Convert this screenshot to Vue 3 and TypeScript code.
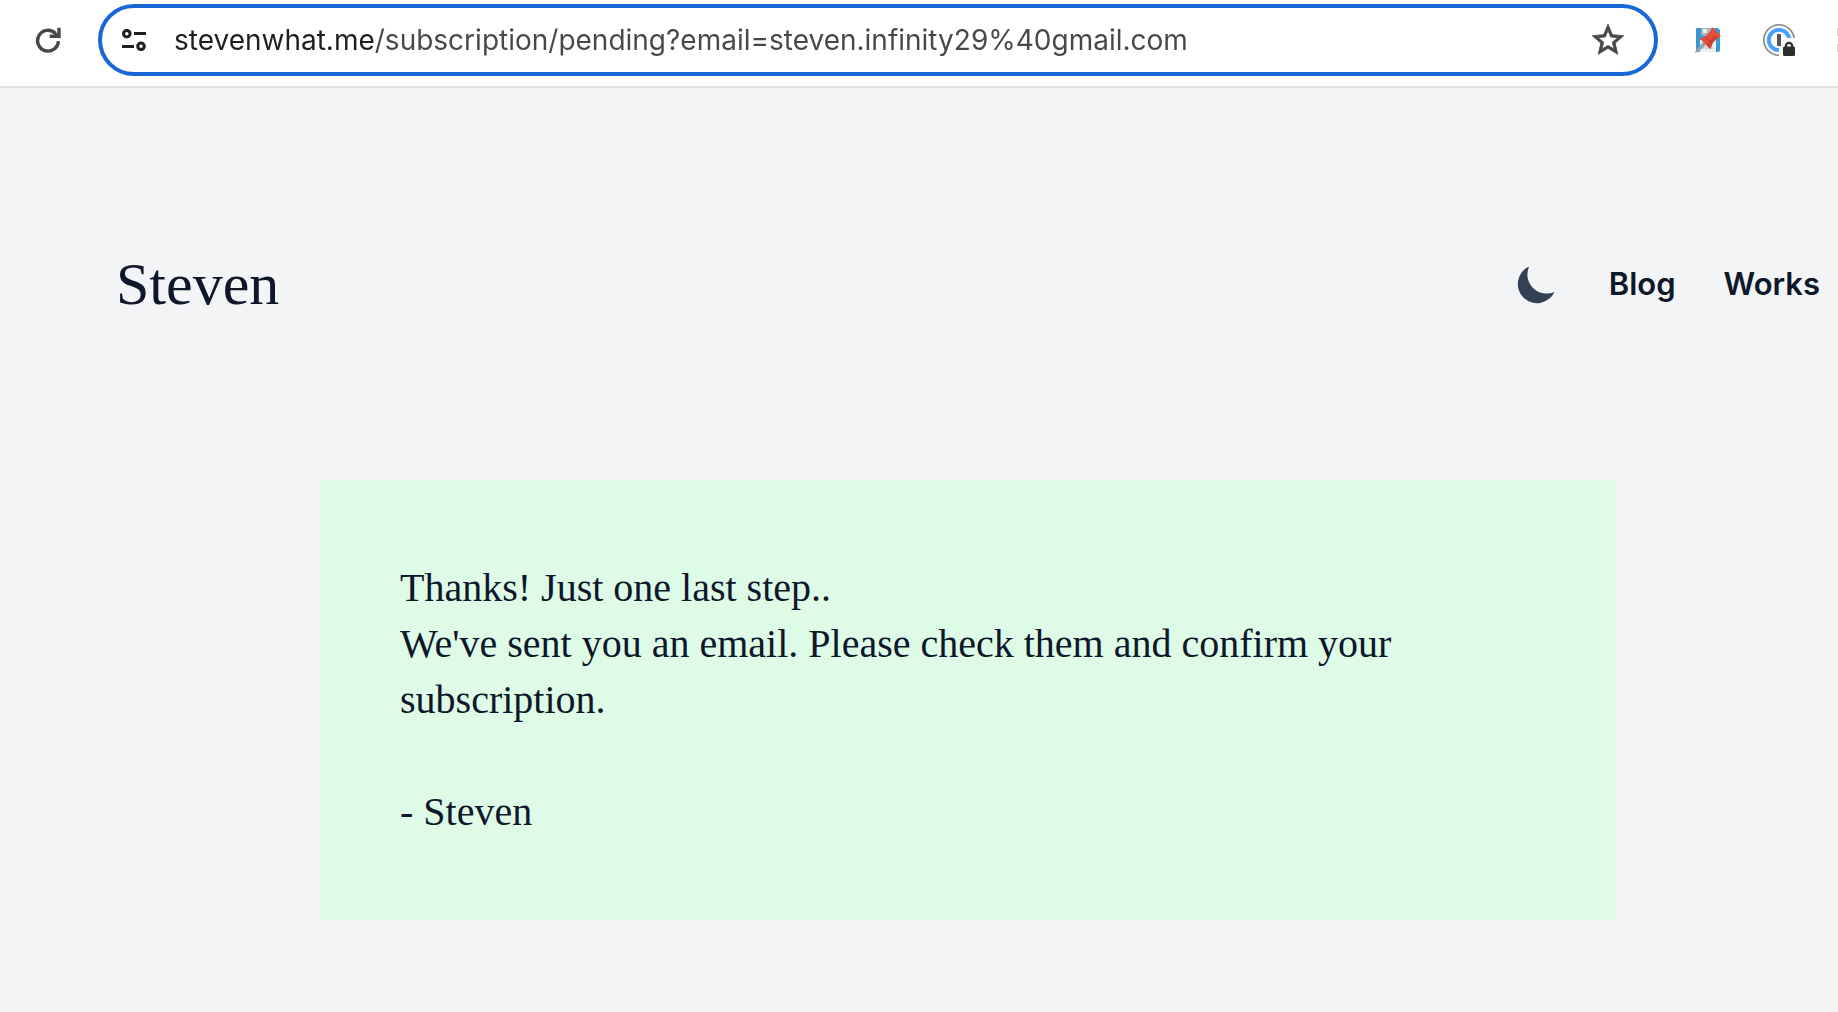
<script setup lang="ts">
import { ref } from 'vue'

const url = ref('stevenwhat.me/subscription/pending?email=steven.infinity29%40gmail.com')
const links: string[] = ['Blog', 'Works']
</script>

<template>
  <div class="window">
    <div class="toolbar">
      <button class="icon-button" type="button" aria-label="Reload">
        <svg width="26" height="26" viewBox="0 0 26 26" fill="none" stroke="#474747" stroke-width="3.4">
          <path d="M23.4 14.2A10.4 10.4 0 1 1 20.4 6.4" />
          <path d="M24 0.8V9.2H14.8" />
          <path d="M18.4 4.8L23.4 9.6" stroke-width="2.8" />
        </svg>
      </button>

      <div class="omnibox">
        <button class="icon-button" type="button" aria-label="View site information">
          <svg width="24" height="22" viewBox="0 0 24 22" fill="none" stroke="#1f1f1f" stroke-width="3">
            <circle cx="4.8" cy="4.7" r="3.3" />
            <path d="M12 4.5H24M0 17.5H12" />
            <circle cx="19" cy="17.3" r="3.3" />
          </svg>
        </button>
        <input v-model="url" class="url" type="text" aria-label="Address bar" spellcheck="false" />
        <button class="icon-button" type="button" aria-label="Bookmark this page">
          <svg width="38" height="38" viewBox="0 0 24 24" fill="#474747" stroke="#474747" stroke-width="0.5">
            <path fill-rule="evenodd" d="M22 9.24l-7.19-.62L12 2 9.19 8.63 2 9.24l5.46 4.73L5.82 21 12 17.27 18.18 21l-1.63-7.03L22 9.24zM12 15.4l-3.76 2.27 1-4.28-3.32-2.88 4.38-.38L12 6.1l1.71 4.04 4.38.38-3.32 2.88 1 4.28L12 15.4z" />
          </svg>
        </button>
      </div>

      <div class="extensions">
        <button class="icon-button" type="button" aria-label="Save pin">
          <svg width="26" height="26" viewBox="0 0 26 26">
            <path d="M2 1H23L25 3V23a2 2 0 0 1-2 2H3a2 2 0 0 1-2-2V2a1 1 0 0 1 1-1z" fill="#3b97d3" />
            <path d="M6 1H19V7a2 2 0 0 1-2 2H8a2 2 0 0 1-2-2z" fill="#a9b5bd" />
            <path d="M8 2H12V6H8z" fill="#ecf0f1" />
            <path d="M5 13H21V25H5z" fill="#ecf0f1" />
            <path d="M7 17H18M7 21H18" stroke="#bdc3c7" stroke-width="1.2" />
            <path d="M0 26L1 23L8 15L11 18L3 25z" fill="#95a5a6" />
            <path d="M17 0L26 9L23 10.5L17.5 16L15.5 22L4.5 11.5L10 10L15.6 4z" fill="#e64c3c" />
            <path d="M23 10.5L17.5 16L15.5 22L11 18L20 8z" fill="#d24031" />
            <path d="M10 10L17.5 16" stroke="#b83226" stroke-width="0.8" />
          </svg>
        </button>
        <button class="icon-button" type="button" aria-label="Password manager, locked">
          <svg width="32" height="32" viewBox="0 0 32 32">
            <circle cx="16" cy="16" r="15.2" fill="#f7f7f7" stroke="#858585" stroke-width="1.6" />
            <circle cx="16" cy="16" r="10.2" fill="#fff" stroke="#44a0ff" stroke-width="3.8" />
            <path d="M16 32V23L19 20V17L23 14H32V32z" fill="#fafafa" />
            <path d="M14 10H18V22H14z" fill="#555" />
            <rect x="20" y="22.5" width="12" height="9.5" rx="1.5" fill="#2d2d2d" />
            <path d="M22.8 23V22a3.2 3.2 0 0 1 6.4 0V23" fill="none" stroke="#2d2d2d" stroke-width="2.2" />
          </svg>
        </button>
        <svg class="more" width="24" height="24" viewBox="0 0 24 24" fill="#d0d0d0" aria-hidden="true">
          <path d="M0 0H24V24H0V16H8V8H0z" />
        </svg>
      </div>
    </div>

    <div class="page">
      <header class="site-header">
        <a class="brand" href="#">Steven</a>
        <nav class="nav">
          <button class="icon-button" type="button" aria-label="Toggle dark mode">
            <svg width="48" height="48" viewBox="0 0 20 20" fill="#334155">
              <path d="M17.293 13.293A8 8 0 016.707 2.707a8.001 8.001 0 1010.586 10.586z" />
            </svg>
          </button>
          <a v-for="link in links" :key="link" class="nav-link" href="#">{{ link }}</a>
        </nav>
      </header>

      <main class="notice">
        <p>Thanks! Just one last step..</p>
        <p>We've sent you an email. Please check them and confirm your subscription.</p>
        <p class="signature">- Steven</p>
      </main>
    </div>
  </div>
</template>

<style>
body {
  margin: 0;
  background: #f2f4f6;
}
</style>

<style scoped>
.window {
  overflow: hidden;
}

.icon-button {
  display: flex;
  flex: none;
  padding: 0;
  border: 0;
  background: none;
}

.toolbar {
  display: flex;
  align-items: center;
  gap: 37px;
  padding: 4px 0 10px 35px;
  border-bottom: 2px solid #e0e2e0;
  background: #fff;
}

.omnibox {
  box-sizing: border-box;
  display: flex;
  flex: 1;
  align-items: center;
  min-width: 0;
  height: 72px;
  padding: 0 27px 0 20px;
  border: 4px solid #1967d7;
  border-radius: 36px;
}

.url {
  flex: 1;
  min-width: 0;
  height: 40px;
  margin: 0 24px 0 28px;
  padding: 0;
  border: 0;
  outline: 0;
  color: transparent;
  background: linear-gradient(to right, #1f1f1f 200px, #474747 200px);
  background-clip: text;
  -webkit-background-clip: text;
  font: 28px/40px Inter, sans-serif;
}

.extensions {
  display: flex;
  flex: none;
  align-items: center;
  gap: 42px;
  margin-right: -23px;
}

.page {
  padding: 156px 18px 92px 116px;
  color: #0f172a;
}

.site-header {
  display: flex;
  align-items: center;
  justify-content: space-between;
  height: 80px;
  margin-bottom: 156px;
}

.brand {
  color: inherit;
  font: 60px/80px "Liberation Serif", serif;
  text-decoration: none;
}

.nav {
  display: flex;
  align-items: center;
  gap: 48px;
}

.nav-link {
  color: inherit;
  font: 600 31px/48px Inter, sans-serif;
  text-decoration: none;
}

.notice {
  box-sizing: border-box;
  max-width: 1296px;
  margin: 0 auto;
  padding: 80px;
  background: #ddfbe7;
  font: 40px/56px "Liberation Serif", serif;
}

.notice p {
  margin: 0;
}

.notice .signature {
  margin-top: 56px;
}
</style>
